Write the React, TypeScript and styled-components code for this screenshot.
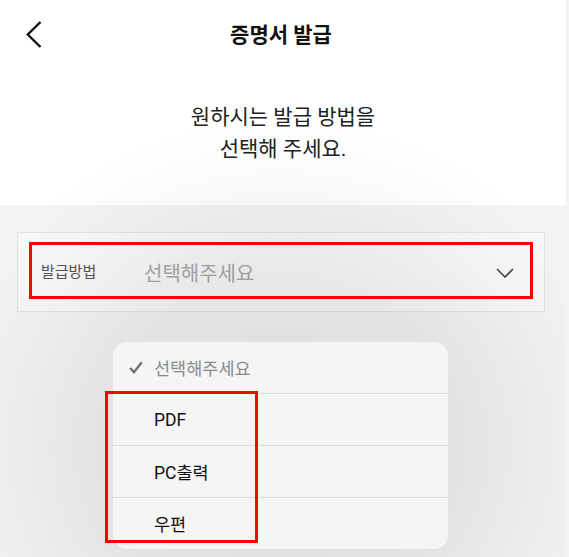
import React from 'react';
import styled, {createGlobalStyle} from 'styled-components';

const GlobalStyle = createGlobalStyle`
    html, body {
        margin: 0;
        padding: 0;
        background: #f3f3f3;
    }

    body {
        font-family: "Roboto", "Noto Sans CJK KR", sans-serif;
        -webkit-font-smoothing: antialiased;
    }
`;

const options = ["PDF", "PC출력", "우편"];

export default function App() {
    return (
        <>
            <GlobalStyle/>
            <Screen>
                <Top>
                    <Header>
                        <BackButton aria-label="뒤로">
                            <svg width="16" height="27" viewBox="0 0 16 27" fill="none">
                                <polyline points="14.5,1 1.8,13.5 14.5,26" stroke="#111" strokeWidth="2.4"/>
                            </svg>
                        </BackButton>
                        <Title>증명서 발급</Title>
                    </Header>
                    <Intro>
                        원하시는 발급 방법을<br/>
                        선택해 주세요.
                    </Intro>
                </Top>

                <Content>
                    <SelectBox>
                        <SelectLabel>발급방법</SelectLabel>
                        <Placeholder>선택해주세요</Placeholder>
                        <svg width="18" height="10" viewBox="0 0 18 10" fill="none">
                            <polyline points="1,1 9,9 17,1" stroke="#444" strokeWidth="1.6"/>
                        </svg>
                    </SelectBox>
                </Content>

                <Dim/>

                <Menu>
                    <MenuItem $muted>
                        <svg width="14" height="13" viewBox="0 0 14 13" fill="none">
                            <polyline points="1.2,7 5,11.2 12.8,1.2" stroke="#6e6e6e" strokeWidth="2.2"/>
                        </svg>
                        선택해주세요
                    </MenuItem>
                    {options.map((o) => (
                        <MenuItem key={o}>{o}</MenuItem>
                    ))}
                </Menu>

                <Marker $left={29} $top={242} $width={504} $height={57}/>
                <Marker $left={105} $top={391} $width={153} $height={152}/>
            </Screen>
        </>
    );
}

const Screen = styled.div`
    position: relative;
    width: 566px;
    height: 557px;
    overflow: hidden;
    display: flex;
    flex-direction: column;
    background: #f3f3f3;
`;

const Top = styled.section`
    background: #ffffff;
    height: 205px;
    display: flex;
    flex-direction: column;
`;

const Header = styled.header`
    position: relative;
    height: 70px;
    display: flex;
    align-items: center;
    justify-content: center;
`;

const BackButton = styled.button`
    position: absolute;
    left: 26px;
    top: 21px;
    padding: 0;
    border: none;
    background: none;
    display: flex;
`;

const Title = styled.h1`
    margin: -4px 4px 0 0;
    font-size: 21px;
    font-weight: 700;
    color: #111;
`;

const Intro = styled.p`
    margin: 31px 0 0;
    text-align: center;
    font-size: 21px;
    line-height: 32px;
    color: #222;
`;

const Content = styled.main`
    flex: 1;
    padding: 27px 21px 0 17px;
`;

const SelectBox = styled.div`
    height: 78px;
    border: 1px solid #e3e3e3;
    background: #f8f8f8;
    display: flex;
    align-items: center;
    padding: 0 30px 0 23px;

    svg {
        margin-top: 1px;
    }
`;

const SelectLabel = styled.span`
    width: 103px;
    font-size: 15px;
    color: #555;
    margin-top: -3px;
`;

const Placeholder = styled.span`
    flex: 1;
    font-size: 20px;
    color: #a9a9a9;
`;

const Dim = styled.div`
    position: absolute;
    inset: 0;
    pointer-events: none;
    background: radial-gradient(
            ellipse 350px 330px at 281px 445px,
            rgba(0, 0, 0, 0.085) 0%,
            rgba(0, 0, 0, 0.065) 50%,
            rgba(0, 0, 0, 0.018) 82%,
            rgba(0, 0, 0, 0) 100%
    );
`;

const Menu = styled.ul`
    position: absolute;
    left: 113px;
    top: 342px;
    width: 335px;
    margin: 0;
    padding: 0;
    list-style: none;
    background: #f5f5f5;
    border-radius: 14px;
    overflow: hidden;
`;

const MenuItem = styled.li<{ $muted?: boolean }>`
    height: 51px;
    display: flex;
    align-items: center;
    gap: 11px;
    padding-left: ${({$muted}) => ($muted ? "16px" : "41px")};
    font-size: 17.5px;
    color: ${({$muted}) => ($muted ? "#8a8a8a" : "#111")};

    & + & {
        border-top: 1px solid #dadada;
    }
`;

const Marker = styled.div<{ $left: number; $top: number; $width: number; $height: number }>`
    position: absolute;
    left: ${({$left}) => $left}px;
    top: ${({$top}) => $top}px;
    width: ${({$width}) => $width}px;
    height: ${({$height}) => $height}px;
    box-sizing: border-box;
    border: 3px solid #ff0000;
    pointer-events: none;
`;
